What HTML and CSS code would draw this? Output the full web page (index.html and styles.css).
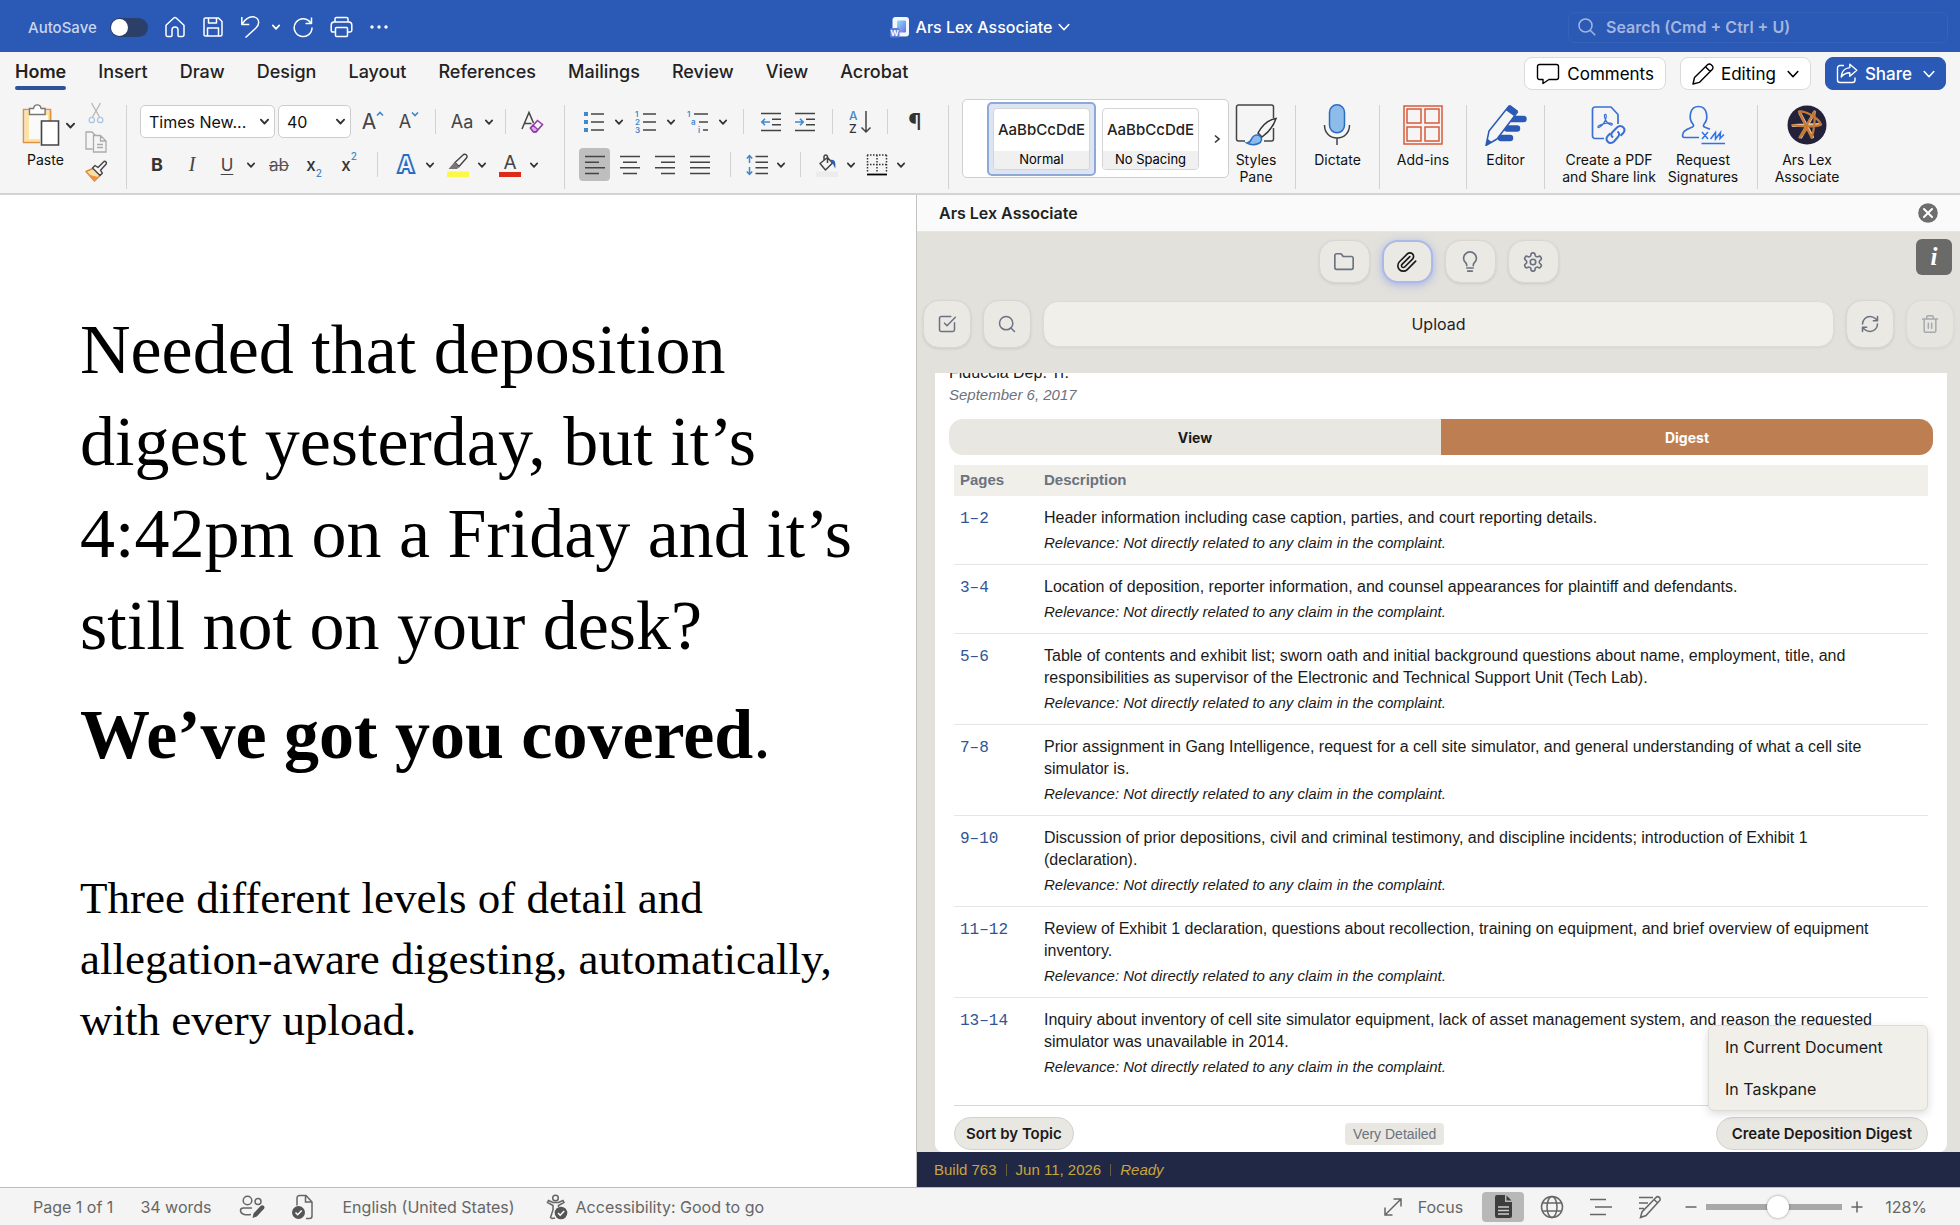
FILE: index.html
```html
<!DOCTYPE html>
<html lang="en">
<head>
<meta charset="utf-8">
<meta name="viewport" content="width=device-width, initial-scale=1">
<title>Ars Lex Associate</title>
<link rel="stylesheet" href="styles.css">
</head>
<body>
<svg class="sprite" aria-hidden="true">
  <symbol id="chev" viewBox="0 0 8 8"><path d="M.8 2.4 4 5.8 7.2 2.4" fill="none" stroke="currentColor" stroke-width="1.7" stroke-linecap="round" stroke-linejoin="round"/></symbol>
  <symbol id="chevthin" viewBox="0 0 12 12"><path d="M1.2 3.5 6 8.7l4.800-5.200" fill="none" stroke="currentColor" stroke-width="1.600" stroke-linecap="round" stroke-linejoin="round"/></symbol>
</svg>

<header class="titlebar">
  <div class="quick">
    <label class="autosave">AutoSave <input type="checkbox" role="switch" class="toggle"></label>
    <button class="qbtn" aria-label="Home"><svg width="22" height="22" viewBox="0 0 22 22"><path d="M2 9.2 9.8 2a1.8 1.8 0 0 1 2.4 0L20 9.2V19a1.4 1.4 0 0 1-1.4 1.4H15a1 1 0 0 1-1-1V14a3 3 0 0 0-6 0v5.4a1 1 0 0 1-1 1H3.4A1.4 1.4 0 0 1 2 19Z"/></svg></button>
    <button class="qbtn" aria-label="Save"><svg width="22" height="22" viewBox="0 0 22 22"><path d="M3.5 2h13L20 5.5V18.500A1.500 1.500 0 0 1 18.500 20h-15A1.500 1.500 0 0 1 2 18.500v-15A1.500 1.500 0 0 1 3.500 2ZM6.500 2v5h8V2M5.500 20v-8h11v8"/></svg></button>
    <button class="qbtn" aria-label="Undo"><svg width="20" height="24" viewBox="0 0 20 24"><path d="M1.8 2v7.500h7.500M2.200 9C5 4.500 8.500 1.800 12.500 1.800c4 0 6.200 2.700 6.200 5.700 0 2.300-1.200 3.900-3 5.700L5.500 22.500"/></svg></button>
    <button class="qbtn qchev" aria-label="Undo options"><svg width="8" height="8"><use href="#chev"/></svg></button>
    <button class="qbtn" aria-label="Redo"><svg width="22" height="22" viewBox="0 0 22 22"><path d="M18.800 7.200A8.900 8.900 0 1 0 20 11.500M19.500 1.500v6h-6"/></svg></button>
    <button class="qbtn" aria-label="Print"><svg width="23" height="22" viewBox="0 0 23 22"><path d="M5 6V3a1.500 1.500 0 0 1 1.500-1.500h10A1.500 1.500 0 0 1 18 3v3M5.500 16H3a1.800 1.800 0 0 1-1.800-1.800V9A3 3 0 0 1 4 6h15a3 3 0 0 1 2.800 3v5.200A1.800 1.800 0 0 1 20 16h-2.500M6.500 11.500h10a1 1 0 0 1 1 1v7a1 1 0 0 1-1 1h-10a1 1 0 0 1-1-1v-7a1 1 0 0 1 1-1Z"/></svg></button>
    <button class="qbtn" aria-label="More"><svg width="20" height="8" viewBox="0 0 20 8"><g fill="currentColor" stroke="none"><circle cx="3" cy="4" r="1.700"/><circle cx="10" cy="4" r="1.700"/><circle cx="17" cy="4" r="1.700"/></g></svg></button>
  </div>
  <button class="doctitle">
    <svg width="20" height="22" viewBox="0 0 20 22"><defs><linearGradient id="wd" x1="0" y1="0" x2="1" y2="1"><stop offset="0" stop-color="#8fe0f2"/><stop offset="1" stop-color="#6a6ee8"/></linearGradient></defs><rect x="2.500" y="1" width="16.500" height="19.500" rx="3" fill="#f4f6fd"/><rect x="7" y="4.500" width="9" height="12" rx="1" fill="url(#wd)"/><rect x="0" y="12" width="9.500" height="9.500" rx="1.500" fill="#5b80d8"/><text x="4.700" y="19.500" font-family="Inter, sans-serif" font-size="8" font-weight="700" fill="#fff" text-anchor="middle">W</text></svg>
    <span>Ars Lex Associate</span>
    <svg width="12" height="12"><use href="#chevthin"/></svg>
  </button>
  <label class="search">
    <svg width="18" height="18" viewBox="0 0 18 18"><circle cx="7.500" cy="7.500" r="6.500"/><path d="m12.200 12.200 5 5"/></svg>
    <input type="search" aria-label="Search" placeholder="Search (Cmd + Ctrl + U)">
  </label>
</header>

<div class="tabbar">
  <nav class="tabs" aria-label="Ribbon tabs">
    <a href="#" class="tab active" aria-current="page">Home</a><a href="#" class="tab">Insert</a><a href="#" class="tab">Draw</a><a href="#" class="tab">Design</a><a href="#" class="tab">Layout</a><a href="#" class="tab">References</a><a href="#" class="tab">Mailings</a><a href="#" class="tab">Review</a><a href="#" class="tab">View</a><a href="#" class="tab">Acrobat</a>
  </nav>
  <div class="tabactions">
    <button class="pill"><svg width="24" height="22" viewBox="0 0 24 22"><path d="M3.500 1.500h17A2 2 0 0 1 22.500 3.500v11a2 2 0 0 1-2 2H13l-6 4v-4H3.500a2 2 0 0 1-2-2v-11a2 2 0 0 1 2-2Z"/></svg>Comments</button>
    <button class="pill"><svg width="22" height="22" viewBox="0 0 22 22"><path d="M1 21 2.500 14.500 15.500 1.800a2.600 2.600 0 0 1 3.700 0l1 1a2.600 2.600 0 0 1 0 3.700L7.300 19.400ZM13.500 3.800l4.700 4.700"/></svg>Editing<svg class="pc" width="12" height="12"><use href="#chevthin"/></svg></button>
    <button class="pill share"><svg width="22" height="21" viewBox="0 0 22 21"><path d="M8 2.500H4A2.500 2.500 0 0 0 1.500 5v12A2.500 2.500 0 0 0 4 19.500h12.500A2.500 2.500 0 0 0 19 17v-2.500M13.800 1.200l7 6-7 6V9.700c-4 0-6.300 1.300-8.600 4.300.3-5 3.300-9 8.600-9.400Z"/></svg>Share<svg class="pc" width="12" height="12"><use href="#chevthin"/></svg></button>
  </div>
</div>

<div class="ribbon" role="toolbar" aria-label="Home">
  <div class="group clipboard">
    <button class="big paste"><span class="bigicon"><svg width="38" height="42" viewBox="0 0 38 42"><path d="M3 7h27v32H3Z" fill="#fbe3a0"/><path d="M7 11h19v24H7Z" fill="#fafafa"/><path d="M1.500 5.500h27v33h-27Z" fill="none" stroke="#e39243" stroke-width="1.600"/><path d="M18 17h20v25H18Z" fill="#f5f5f5"/><path d="M7.500 10.500v-6h4c.4-2.200 1.900-3.600 3.800-3.600s3.400 1.400 3.800 3.600h4v6Z" fill="#fff" stroke="#777" stroke-width="1.400"/><path d="M19.500 17h17v24h-17Z" fill="#fff" stroke="#444" stroke-width="1.600"/></svg><svg class="chev" width="9" height="9"><use href="#chev"/></svg></span><span>Paste</span></button>
    <div class="clipstack">
      <button class="tool" aria-label="Cut"><svg width="22" height="22" viewBox="0 0 22 22" fill="none"><path d="M6.500 1 14.500 15M15.500 1l-8 14" stroke="#b5b5b5" stroke-width="1.300"/><circle cx="6.800" cy="18" r="2.700" stroke="#a9c8e6" stroke-width="1.300"/><circle cx="15.200" cy="18" r="2.700" stroke="#a9c8e6" stroke-width="1.300"/></svg></button>
      <button class="tool" aria-label="Copy"><svg width="22" height="22" viewBox="0 0 22 22" fill="none" stroke="#aaa" stroke-width="1.300"><path d="M7.500 18H1V1h6l3.500 3.500M8.500 4.500h7l5.500 5.500v11H8.500ZM15.500 4.500V10H21M12 13.500h6M12 16.500h6"/></svg></button>
      <button class="tool" aria-label="Format painter"><svg width="22" height="22" viewBox="0 0 22 22" fill="none"><path d="m1 11.500 8-3.500 6.500 7L9.500 21Z" fill="#fbdfa6" stroke="#e08a35" stroke-width="1.400" stroke-linejoin="round"/><path d="M3 14.500 13 17l-4 3.500Z" fill="#e9923f"/><path d="m7.500 8 2.500-2.500 3 2L18.500 2a1.600 1.600 0 0 1 2.500 2.200l-5.500 6 1.800 3-2.300 2.300Z" fill="#f5f5f5" stroke="#444" stroke-width="1.400" stroke-linejoin="round"/></svg></button>
    </div>
  </div>
  <span class="gsep"></span>
  <div class="group fontgroup">
    <div class="row row1">
      <div class="selects">
        <span class="sel selfont"><select aria-label="Font"><option>Times New...</option></select><svg width="9" height="9"><use href="#chev"/></svg></span>
        <span class="sel selsize"><select aria-label="Font size"><option>40</option></select><svg width="9" height="9"><use href="#chev"/></svg></span>
      </div>
      <button class="tool w28 grow" aria-label="Grow font"><span>A</span><svg width="8" height="8" viewBox="0 0 8 8"><path d="M1 5.500 4 2.500l3 3"/></svg></button>
      <button class="tool w28 grow small" aria-label="Shrink font"><span>A</span><svg width="8" height="8" viewBox="0 0 8 8"><path d="m1 2.500 3 3 3-3"/></svg></button>
      <span class="tsep"></span>
      <button class="split case"><span class="w28">Aa</span><svg class="chev" width="8" height="8"><use href="#chev"/></svg></button>
      <span class="tsep"></span>
      <button class="tool w28" aria-label="Clear formatting"><svg width="24" height="24" viewBox="0 0 24 24" fill="none"><path d="M2 19 9 2.500 13.500 13M4.500 13.500h7" stroke="#444" stroke-width="1.500"/><path d="m10.500 18 7-7.500 5 4-6.500 7.500h-2.500Z" fill="#f5f5f5" stroke="#9339a8" stroke-width="1.600"/><path d="m10.500 18 2.500-2.800 4.800 4.300-1.900 2.300h-2.500Z" fill="#d9b3e0" stroke="#9339a8" stroke-width="1.400"/></svg></button>
    </div>
    <div class="row row2">
      <button class="tool w22 tb">B</button>
      <button class="tool w22 ti">I</button>
      <button class="split"><span class="w22 tu">U</span><svg class="chev" width="8" height="8"><use href="#chev"/></svg></button>
      <button class="tool w22 ts">ab</button>
      <button class="tool w22 tx">x<sub>2</sub></button>
      <button class="tool w22 tx">x<sup>2</sup></button>
      <span class="tsep"></span>
      <button class="split"><span class="w22 fx">A</span><svg class="chev" width="8" height="8"><use href="#chev"/></svg></button>
      <button class="split" aria-label="Highlight"><svg width="22" height="24" viewBox="0 0 22 24"><path d="M0 18.500h22v5.500H0Z" fill="#fdf748"/><path d="M8 9.500 16 2a2.300 2.300 0 0 1 3.500 3l-7.500 8.500Z" fill="#f5f5f5" stroke="#444" stroke-width="1.400"/><path d="m7.500 9 5 5-2.500 2H1.500Z" fill="#777"/></svg><svg class="chev" width="8" height="8"><use href="#chev"/></svg></button>
      <button class="split"><span class="w22 fc">A</span><svg class="chev" width="8" height="8"><use href="#chev"/></svg></button>
    </div>
  </div>
  <span class="gsep"></span>
  <div class="group paragroup">
    <div class="row row1">
      <button class="split" aria-label="Bullets"><svg width="22" height="22" viewBox="0 0 22 22"><path d="M8 3h13M8 11h13M8 19h13" stroke="#444" stroke-width="1.600"/><path d="M1 1h4v4H1ZM1 9h4v4H1ZM1 17h4v4H1Z" fill="#3f88cc"/></svg><svg class="chev" width="8" height="8"><use href="#chev"/></svg></button>
      <button class="split" aria-label="Numbering"><svg width="22" height="24" viewBox="0 0 22 24"><path d="M8 4h13M8 12h13M8 20h13" stroke="#444" stroke-width="1.600"/><g font-family="Inter, sans-serif" font-weight="600" font-size="8" fill="#3f88cc"><text x="0" y="7">1</text><text x="0" y="15">2</text><text x="0" y="23">3</text></g></svg><svg class="chev" width="8" height="8"><use href="#chev"/></svg></button>
      <button class="split" aria-label="Multilevel list"><svg width="22" height="24" viewBox="0 0 22 24"><path d="M7 4h14M12 12h9M16 20h5" stroke="#444" stroke-width="1.600"/><g font-family="Inter, sans-serif" font-weight="600" font-size="8" fill="#3f88cc"><text x="0" y="7">1</text><text x="4" y="15">a</text><text x="11" y="23">i</text></g></svg><svg class="chev" width="8" height="8"><use href="#chev"/></svg></button>
      <span class="tsep"></span>
      <button class="tool w22" aria-label="Decrease indent"><svg width="22" height="22" viewBox="0 0 22 22" fill="none"><path d="M1 2.500h20M12 8.200h9M12 13.800h9M1 19.500h20" stroke="#444" stroke-width="1.500"/><path d="M10 11H2M5 7.800 1.800 11 5 14.200" stroke="#3f88cc" stroke-width="1.600"/></svg></button>
      <button class="tool w22" aria-label="Increase indent"><svg width="22" height="22" viewBox="0 0 22 22" fill="none"><path d="M1 2.500h20M12 8.200h9M12 13.800h9M1 19.500h20" stroke="#444" stroke-width="1.500"/><path d="M1 11h8M6 7.800 9.200 11 6 14.200" stroke="#3f88cc" stroke-width="1.600"/></svg></button>
      <span class="tsep"></span>
      <button class="tool w22" aria-label="Sort"><svg width="24" height="28" viewBox="0 0 24 28"><g font-family="Inter, sans-serif" font-weight="500" font-size="12"><text x="1" y="12" fill="#3f88cc">A</text><text x="1" y="25" fill="#333">Z</text></g><path d="M18 3v21M13.500 19.500 18 24l4.500-4.500" fill="none" stroke="#444" stroke-width="1.500"/></svg></button>
      <span class="tsep"></span>
      <button class="tool w22 pilcrow" aria-label="Show marks">¶</button>
    </div>
    <div class="row row2">
      <div class="aligns">
        <button class="align on" aria-label="Align left"><svg width="22" height="22" viewBox="0 0 22 22"><path d="M1 2.500h20M1 8.200h14M1 13.800h20M1 19.500h14"/></svg></button>
        <button class="align" aria-label="Align centre"><svg width="22" height="22" viewBox="0 0 22 22"><path d="M1 2.500h20M4 8.200h14M1 13.800h20M4 19.500h14"/></svg></button>
        <button class="align" aria-label="Align right"><svg width="22" height="22" viewBox="0 0 22 22"><path d="M1 2.500h20M7 8.200h14M1 13.800h20M7 19.500h14"/></svg></button>
        <button class="align" aria-label="Justify"><svg width="22" height="22" viewBox="0 0 22 22"><path d="M1 2.500h20M1 8.200h20M1 13.800h20M1 19.500h20"/></svg></button>
      </div>
      <span class="tsep"></span>
      <button class="split" aria-label="Line spacing"><svg width="22" height="22" viewBox="0 0 22 22" fill="none"><path d="M9.500 2.500H22M9.500 8.200H22M9.500 13.800H22M9.500 19.500H22" stroke="#444" stroke-width="1.500"/><path d="M3.500 2v7M.8 4.500l2.700-3 2.700 3M3.500 13v7M.8 17.500l2.700 3 2.700-3" stroke="#3f88cc" stroke-width="1.500"/></svg><svg class="chev" width="8" height="8"><use href="#chev"/></svg></button>
      <span class="tsep"></span>
      <button class="split" aria-label="Shading"><svg width="22" height="24" viewBox="0 0 22 24"><path d="M0 18.500h22v5.500H0Z" fill="#ececec"/><path d="M4 10.500 11.500 4.500l5 5.500-7 7ZM11.500 10V3.500a1.800 1.800 0 0 0-3.500 0V7" fill="none" stroke="#444" stroke-width="1.500" stroke-linejoin="round"/><path d="M14.500 7c4-1 5.500 1.500 4.800 8.500-1.300-2-2-4.500-2.800-5.500Z" fill="#2c62b5"/></svg><svg class="chev" width="8" height="8"><use href="#chev"/></svg></button>
      <button class="split" aria-label="Borders"><svg width="22" height="22" viewBox="0 0 22 22" fill="none" stroke="#333" stroke-width="1.500"><path d="M1 1h20M1.500 1v18M20.500 1v18M11 1v18M1 10.500h20" stroke-dasharray="1.500 1.500"/><path d="M1 20.500h20" stroke="#000" stroke-width="1.800"/></svg><svg class="chev" width="8" height="8"><use href="#chev"/></svg></button>
    </div>
  </div>
  <span class="gsep"></span>
  <div class="group stylegroup">
    <div class="gallery">
      <button class="style on"><span class="sbox"><span class="sample">AaBbCcDdE</span><span class="sname">Normal</span></span></button>
      <button class="style"><span class="sbox"><span class="sample">AaBbCcDdE</span><span class="sname">No Spacing</span></span></button>
      <button class="more" aria-label="More styles"><svg width="8" height="10" viewBox="0 0 8 10"><path d="m2 1.500 4 3.500-4 3.500" fill="none" stroke="#333" stroke-width="1.600"/></svg></button>
    </div>
    <button class="big wpane"><span class="bigicon"><svg width="42" height="42" viewBox="0 0 42 42" fill="none"><path d="M10 37H3.500A2 2 0 0 1 1.500 35V3a2 2 0 0 1 2-2h33A2 2 0 0 1 38.500 3v11M38.500 24v11a2 2 0 0 1-2 2H29" stroke="#444" stroke-width="1.500"/><path d="M23 29C28 20 34 15.500 41 14.500 39 21 34.500 27.500 27 33Z" fill="#f5f5f5" stroke="#333" stroke-width="1.500"/><path d="M12 39c3 0 3.500-2 5-5 1.500-3 5-4 8-2 2.500 2.500 1.800 6-1.500 7.500-3.500 1.500-8 1.500-11.500-.5Z" fill="#8dbbea" stroke="#2c6cc0" stroke-width="1.500"/></svg></span><span>Styles<br>Pane</span></button>
  </div>
  <span class="gsep"></span>
  <div class="group gdict"><button class="big"><span class="bigicon"><svg width="28" height="42" viewBox="0 0 28 42" fill="none"><rect x="6.500" y="0.800" width="15" height="28" rx="7.500" fill="#8dbbea" stroke="#2c6cc0" stroke-width="1.500"/><path d="M1.500 21c0 8 5.500 13 12.500 13s12.500-5 12.500-13M14 34v7" stroke="#444" stroke-width="1.500"/></svg></span><span>Dictate</span></button></div>
  <span class="gsep"></span>
  <div class="group gadd"><button class="big"><span class="bigicon"><svg width="40" height="40" viewBox="0 0 40 40" fill="none" stroke="#d9593a" stroke-width="1.500"><path d="M1 1h38v38H1ZM4 4h14v14H4ZM22 4h14v14H22ZM4 22h14v14H4ZM22 22h14v14H22Z"/></svg></span><span>Add-ins</span></button></div>
  <span class="gsep"></span>
  <div class="group gedit"><button class="big"><span class="bigicon"><svg width="42" height="42" viewBox="0 0 42 42"><g stroke="#2b59b6" stroke-width="6.500" stroke-linecap="round"><path d="M26 15h12.500M22 24.500h10M16 34h9"/></g><path d="M1 41.500 4 27 24 2l8.500 6L12 35Z" fill="#f5f5f5" stroke="#2b59b6" stroke-width="1.500" stroke-linejoin="round"/><path d="M20.500 6 25 .8 33 6.800 29 12ZM1 41.500 2.300 34.500 6.500 38Z" fill="#2b59b6"/></svg></span><span>Editor</span></button></div>
  <span class="gsep"></span>
  <div class="group gadobe">
    <button class="big wpdf"><span class="bigicon"><svg width="36" height="40" viewBox="0 0 36 40" fill="none" stroke="#3a6fd8" stroke-width="1.700" stroke-linejoin="round"><path d="M13 33.500H4A2.500 2.500 0 0 1 1.500 31V4.500A2.500 2.500 0 0 1 4 2h16l7 7.500V19"/><path d="M13.500 10c1-1.800 2.500-.2 1.500 3-1 4-3.500 7.500-7 9.500-1.500.5-1.500-1 0-2 4-2 8.500-3.200 12.500-2.200 1.800.8.500 2.500-1.200 1.500-3.500-1.800-6.800-6.800-5.800-9.800Z" stroke-width="1.200"/><g stroke-width="2"><path d="M22 32.500c-2.500-2-2-4 0-6l4-4c2-2 4.500-2 6.200-.2 1.800 1.800 1.600 4-.2 6l-2.500 2.500"/><path d="M26.500 26.500c2.500 2 2 4 0 6l-3.500 4c-2 2-4.500 2-6.200.2-1.800-1.800-1.600-4 .2-6l2.500-2.500"/></g></svg></span><span>Create a PDF<br>and Share link</span></button>
    <button class="big wreq"><span class="bigicon"><svg width="44" height="40" viewBox="0 0 44 40" fill="none" stroke="#3a6fd8" stroke-width="1.700"><path d="M18 32.500H3.500c-2 0-2.300-1.500-1.500-4 1-3.500 5-4.500 9-6.200 2-.8 2-2 .5-3.800C7.500 13.500 8.500 1.500 17.500 1.500s10 12 6 17c-1.500 2-1.500 3 .5 3.800l5 2"/><path d="m21 27 6 7M27 27l-6 7M29.500 34l5-6.500V34l5-6.500-.5 6 4-4M20.500 38.500H44" stroke="#2b74ea" stroke-width="1.500"/></svg></span><span>Request<br>Signatures</span></button>
  </div>
  <span class="gsep"></span>
  <div class="group gars"><button class="big"><span class="bigicon"><svg width="40" height="40" viewBox="0 0 40 40" fill="none"><circle cx="20" cy="20" r="19.500" fill="#24223a"/><g stroke-linecap="round" stroke-linejoin="round"><path d="M13 8.500 25.500 32M27.500 7 14 32M6 20.500l27-1" stroke="#e0c3a6" stroke-width="3"/><path d="M12 6.500C17 5.500 31 12 34 19.500 30 22 14 22 5.500 20M12 6.500 24.500 32.500C27 26 28 15 27.500 6.500L12.500 32.500c3.500-2 7-8 8-12" stroke="#c47a34" stroke-width="2.200"/></g></svg></span><span>Ars Lex<br>Associate</span></button></div>
</div>

<main class="workspace">
  <article class="document">
    <p class="lead">Needed that deposition digest yesterday, but it’s 4:42pm on a Friday and it’s still not on your desk?</p>
    <p class="lead"><strong>We’ve got you covered</strong>.</p>
    <p class="body">Three different levels of detail and allegation-aware digesting, automatically, with every upload.</p>
  </article>

  <aside class="pane">
    <div class="panehead"><h2>Ars Lex Associate</h2><button class="close" aria-label="Close"><svg width="20" height="20" viewBox="0 0 20 20"><circle cx="10" cy="10" r="9.800" fill="#6e6e6e"/><path d="m6 6 8 8M14 6l-8 8" stroke="#fff" stroke-width="2" stroke-linecap="round"/></svg></button></div>
    <div class="nav">
      <button class="ibtn" aria-label="Folders"><svg width="22" height="22" viewBox="0 0 24 24"><path d="M4 20h16a2 2 0 0 0 2-2V8a2 2 0 0 0-2-2h-7.900a2 2 0 0 1-1.690-.9L9.600 3.900A2 2 0 0 0 7.930 3H4a2 2 0 0 0-2 2v13a2 2 0 0 0 2 2Z"/></svg></button>
      <button class="ibtn on" aria-label="Attachments"><svg width="22" height="22" viewBox="0 0 24 24"><path d="m21.440 11.050-9.190 9.190a6 6 0 0 1-8.490-8.490l8.570-8.570A4 4 0 1 1 18 8.840l-8.590 8.570a2 2 0 0 1-2.830-2.830l8.490-8.480"/></svg></button>
      <button class="ibtn" aria-label="Ideas"><svg width="22" height="22" viewBox="0 0 24 24"><path d="M8.500 16c0-1.500-.5-2.500-1.500-3.500C5.600 11.200 5 9.700 5 8a7 7 0 0 1 14 0c0 1.700-.6 3.200-2 4.500-1 1-1.500 2-1.500 3.500M8.500 18.500h7M9.500 22h5"/></svg></button>
      <button class="ibtn" aria-label="Settings"><svg width="22" height="22" viewBox="0 0 24 24"><path d="M12.220 2h-.44a2 2 0 0 0-2 2v.18a2 2 0 0 1-1 1.730l-.43.25a2 2 0 0 1-2 0l-.15-.08a2 2 0 0 0-2.730.73l-.22.38a2 2 0 0 0 .73 2.730l.15.1a2 2 0 0 1 1 1.720v.51a2 2 0 0 1-1 1.740l-.15.09a2 2 0 0 0-.73 2.730l.22.38a2 2 0 0 0 2.730.73l.15-.08a2 2 0 0 1 2 0l.43.25a2 2 0 0 1 1 1.730V20a2 2 0 0 0 2 2h.44a2 2 0 0 0 2-2v-.18a2 2 0 0 1 1-1.730l.43-.25a2 2 0 0 1 2 0l.15.08a2 2 0 0 0 2.730-.73l.22-.39a2 2 0 0 0-.73-2.730l-.15-.08a2 2 0 0 1-1-1.740v-.5a2 2 0 0 1 1-1.740l.15-.09a2 2 0 0 0 .73-2.730l-.22-.38a2 2 0 0 0-2.730-.73l-.15.08a2 2 0 0 1-2 0l-.43-.25a2 2 0 0 1-1-1.730V4a2 2 0 0 0-2-2z"/><circle cx="12" cy="12" r="3"/></svg></button>
      <button class="info" aria-label="Information">i</button>
    </div>
    <div class="actions">
      <button class="ibtn sq" aria-label="Select"><svg width="20" height="20" viewBox="0 0 24 24"><path d="M21 10.500V19a2 2 0 0 1-2 2H5a2 2 0 0 1-2-2V5a2 2 0 0 1 2-2h11.500M9 11l3 3L22 4"/></svg></button>
      <button class="ibtn sq" aria-label="Find"><svg width="20" height="20" viewBox="0 0 24 24"><circle cx="11" cy="11" r="8"/><path d="m21 21-4.300-4.300"/></svg></button>
      <button class="upload">Upload</button>
      <button class="ibtn sq" aria-label="Refresh"><svg width="20" height="20" viewBox="0 0 24 24"><path d="M3 12a9 9 0 0 1 9-9 9.750 9.750 0 0 1 6.740 2.740L21 8M21 3v5h-5M21 12a9 9 0 0 1-9 9 9.750 9.750 0 0 1-6.740-2.740L3 16M8 16H3v5"/></svg></button>
      <button class="ibtn sq" aria-label="Delete" disabled><svg width="20" height="20" viewBox="0 0 24 24"><path d="M3 6h18M19 6v14a2 2 0 0 1-2 2H7a2 2 0 0 1-2-2V6M8 6V4a2 2 0 0 1 2-2h4a2 2 0 0 1 2 2v2M10 11v6M14 11v6"/></svg></button>
    </div>
    <div class="scroller">
      <section class="card">
        <div class="depname">Fiduccia Dep. Tr.</div>
        <div class="depdate">September 6, 2017</div>
        <div class="switch"><button>View</button><button class="on">Digest</button></div>
        <table class="digest">
          <thead><tr><th class="pages">Pages</th><th>Description</th></tr></thead>
          <tbody>
            <tr><td><a href="#">1–2</a></td><td><p>Header information including case caption, parties, and court reporting details.</p><p class="rel">Relevance: Not directly related to any claim in the complaint.</p></td></tr>
            <tr><td><a href="#">3–4</a></td><td><p>Location of deposition, reporter information, and counsel appearances for plaintiff and defendants.</p><p class="rel">Relevance: Not directly related to any claim in the complaint.</p></td></tr>
            <tr><td><a href="#">5–6</a></td><td><p>Table of contents and exhibit list; sworn oath and initial background questions about name, employment, title, and responsibilities as supervisor of the Electronic and Technical Support Unit (Tech Lab).</p><p class="rel">Relevance: Not directly related to any claim in the complaint.</p></td></tr>
            <tr><td><a href="#">7–8</a></td><td><p>Prior assignment in Gang Intelligence, request for a cell site simulator, and general understanding of what a cell site simulator is.</p><p class="rel">Relevance: Not directly related to any claim in the complaint.</p></td></tr>
            <tr><td><a href="#">9–10</a></td><td><p>Discussion of prior depositions, civil and criminal testimony, and discipline incidents; introduction of Exhibit 1 (declaration).</p><p class="rel">Relevance: Not directly related to any claim in the complaint.</p></td></tr>
            <tr><td><a href="#">11–12</a></td><td><p>Review of Exhibit 1 declaration, questions about recollection, training on equipment, and brief overview of equipment inventory.</p><p class="rel">Relevance: Not directly related to any claim in the complaint.</p></td></tr>
            <tr><td><a href="#">13–14</a></td><td><p>Inquiry about inventory of cell site simulator equipment, lack of asset management system, and reason the requested simulator was unavailable in 2014.</p><p class="rel">Relevance: Not directly related to any claim in the complaint.</p></td></tr>
          </tbody>
        </table>
        <div class="cardfoot">
          <button class="round">Sort by Topic</button>
          <span class="badge">Very Detailed</span>
          <div class="createwrap">
            <button class="round create" aria-haspopup="menu" aria-expanded="true">Create Deposition Digest</button>
            <div class="menu" role="menu"><button role="menuitem">In Current Document</button><button role="menuitem">In Taskpane</button></div>
          </div>
        </div>
      </section>
    </div>
    <div class="build"><span>Build 763</span><i class="bar"></i><span>Jun 11, 2026</span><i class="bar"></i><em>Ready</em></div>
  </aside>
</main>

<footer class="status">
  <button class="st">Page 1 of 1</button>
  <button class="st">34 words</button>
  <button class="st" aria-label="Co-authors"><svg width="26" height="26" viewBox="0 0 26 26"><circle cx="8.500" cy="6.500" r="4.300"/><circle cx="19" cy="7.500" r="3"/><path d="M12 20.500C6 21.500 1.500 20 1.500 16.500 1.500 14.500 3 14 4.500 14H13"/><path d="m13.500 24 1-4.500 7-7.500a2.200 2.200 0 0 1 3.300 3l-7 7.500Z" fill="#555" stroke="none"/></svg></button>
  <button class="st" aria-label="Proofing"><svg width="22" height="26" viewBox="0 0 22 26"><path d="M5 11.500V4a2.500 2.500 0 0 1 2.500-2.500H14L20 8v14a2.500 2.500 0 0 1-2.500 2.500H14M13.500 1.500V8H20"/><circle cx="6.500" cy="18.500" r="6.500" fill="#555" stroke="none"/><path d="m3.500 18.500 2.200 2.200 4-4.200" stroke="#fff"/></svg></button>
  <button class="st lang">English (United States)</button>
  <button class="st acc"><svg width="22" height="26" viewBox="0 0 22 26"><circle cx="9.500" cy="4" r="2.800"/><path d="M9 24 6 24.500 4.500 23.500 7 16V11.500L1.500 8.500 2.500 6.500 7 8.500h5.500L17 6.500 18 8.500 12.500 11.500V13"/><circle cx="15" cy="19" r="6.300" fill="#555" stroke="none"/><path d="m12 19 2.200 2.200 4-4.200" stroke="#fff"/></svg>Accessibility: Good to go</button>
  <div class="right">
    <button class="st focus"><svg width="18" height="18" viewBox="0 0 18 18"><path d="M1 17 17 1M9.500 1H17v7.500M8.500 17H1V9.500"/></svg>Focus</button>
    <div class="views">
      <button class="view on" aria-label="Print layout"><svg width="17" height="23" viewBox="0 0 17 23"><path d="M2 0h8v7h7v14a2 2 0 0 1-2 2H2a2 2 0 0 1-2-2V2A2 2 0 0 1 2 0Z" fill="#3d3d3d" stroke="none"/><path d="M11.500.5 16.500 5.500h-5Z" fill="#3d3d3d" stroke="none"/><path d="M3 12h11M3 15.500h11M3 19h11" stroke="#ccc"/></svg></button>
      <button class="view" aria-label="Web layout"><svg width="24" height="24" viewBox="0 0 24 24"><circle cx="12" cy="12" r="10.500"/><ellipse cx="12" cy="12" rx="5" ry="10.500"/><path d="M2.500 8h19M2.500 16h19"/></svg></button>
      <button class="view" aria-label="Outline"><svg width="24" height="18" viewBox="0 0 24 18"><path d="M1 1.500h16M6 9h17M1 16.500h16"/></svg></button>
      <button class="view" aria-label="Draft"><svg width="24" height="24" viewBox="0 0 24 24"><path d="M1 2.500h14M1 8h9M1 13.500h5M2.500 22.500 4 17 18 2.500a2.300 2.300 0 0 1 3.500 3.300L8 20.500ZM16 4.500l3.500 3.300"/></svg></button>
    </div>
    <div class="zoom">
      <button class="zb" aria-label="Zoom out"><svg width="12" height="12" viewBox="0 0 12 12"><path d="M.5 6h11"/></svg></button>
      <input type="range" aria-label="Zoom" min="0" max="100" value="53">
      <button class="zb" aria-label="Zoom in"><svg width="12" height="12" viewBox="0 0 12 12"><path d="M.5 6h11M6 .5v11"/></svg></button>
    </div>
    <button class="st">128%</button>
  </div>
</footer>
</body>
</html>
```
FILE: styles.css
```css
* { box-sizing: border-box; }
html, body { height: 100%; margin: 0; }
body {
  display: flex;
  flex-direction: column;
  overflow: hidden;
  background: #f5f5f5;
  color: #222;
  font-family: Inter, "Liberation Sans", sans-serif;
  font-size: 16px;
}
button {
  margin: 0;
  padding: 0;
  border: 0;
  background: none;
  color: inherit;
  font: inherit;
}
svg { display: block; flex: none; }
p { margin: 0; }
.sprite { position: absolute; width: 0; height: 0; }

/* Title bar */
.titlebar {
  display: grid;
  grid-template-columns: 1fr auto 1fr;
  align-items: center;
  height: 52px;
  flex: none;
  padding: 2px 12px 0;
  background: #2b59b6;
  color: #fff;
}
.quick { display: flex; align-items: center; gap: 16px; padding-left: 16px; }
.autosave {
  display: flex;
  align-items: center;
  gap: 13px;
  color: #c9d5ee;
  font-size: 15px;
  font-weight: 500;
}
.toggle {
  appearance: none;
  display: flex;
  width: 38px;
  height: 19px;
  margin: 0;
  border-radius: 10px;
  background: #2b3f68;
}
.toggle::before {
  content: "";
  width: 17px;
  height: 17px;
  margin: 1px;
  border-radius: 50%;
  background: #fff;
}
.qbtn svg { fill: none; stroke: currentColor; stroke-width: 1.5; stroke-linejoin: round; }
.qchev { margin: 0 -4px; }
.doctitle { display: flex; align-items: center; gap: 6px; font-weight: 500; }
.search {
  justify-self: end;
  display: flex;
  align-items: center;
  gap: 10px;
  width: 380px;
  height: 31px;
  padding: 0 9px;
  border: 1px solid #3762ba;
  border-radius: 7px;
}
.search svg { fill: none; stroke: #a3b6de; stroke-width: 1.5; }
.search input {
  flex: 1;
  min-width: 0;
  padding: 0;
  border: 0;
  outline: 0;
  background: none;
  color: #fff;
  font: 600 16px Inter, sans-serif;
}
.search input::placeholder { color: #a3b6de; opacity: 1; }

/* Tab bar */
.tabbar {
  display: flex;
  justify-content: space-between;
  flex: none;
  height: 44px;
  padding: 0 14px 0 15px;
}
.tabs { display: flex; gap: 32px; padding-top: 8px; }
.tab {
  color: #222;
  font-size: 18px;
  font-weight: 500;
  line-height: 24px;
  text-decoration: none;
}
.tab.active { font-weight: 600; }
.tab.active::after {
  content: "";
  display: block;
  height: 4px;
  margin-top: 2px;
  border-radius: 2px;
  background: #30519b;
}
.tabactions { display: flex; gap: 14px; padding-top: 5px; }
.pill {
  display: flex;
  align-items: center;
  justify-content: center;
  gap: 7px;
  height: 33px;
  padding: 0 11px;
  border: 1px solid #dadada;
  border-radius: 8px;
  background: #fff;
  color: #000;
  font-size: 17px;
}
.pill svg { fill: none; stroke: currentColor; stroke-width: 1.4; stroke-linejoin: round; }
.pill .pc { margin-left: 4px; }
.share { padding: 0 10px; border-color: #2b59b6; background: #2b59b6; color: #fff; font-weight: 500; }

/* Ribbon */
.ribbon {
  display: flex;
  flex: none;
  padding: 3px 0 4px;
  border-bottom: 2px solid #d3d3d3;
}
.group { flex: none; padding-top: 6px; }
.gsep { flex: none; width: 1px; height: 84px; margin-top: 6px; background: #d2d2d2; }
.big {
  display: flex;
  flex-direction: column;
  align-items: center;
  gap: 6px;
  color: #111;
  font-size: 14px;
  line-height: 17px;
  text-align: center;
  white-space: nowrap;
}
.bigicon { display: flex; align-items: center; justify-content: center; gap: 6px; height: 40px; }
.chev { color: #333; }
.clipboard { display: flex; gap: 10px; width: 126px; padding-left: 22px; }
.paste { align-items: flex-start; }
.paste > span:last-child { padding-left: 5px; }
.clipstack { display: flex; flex-direction: column; gap: 7px; margin-top: -3px; }
.tool { display: flex; align-items: center; justify-content: center; height: 33px; }
.clipstack .tool { height: 22px; }
.split { display: flex; align-items: center; gap: 9px; height: 33px; color: #333; }
.w22 { display: block; width: 22px; text-align: center; }
.w28 { display: block; width: 28px; text-align: center; }
.tool.w22, .tool.w28 { display: flex; }
.row { display: flex; align-items: center; height: 33px; }
.row + .row { margin-top: 10px; }
.tsep { width: 1px; height: 25px; margin: 0 4px; background: #d2d2d2; }

.fontgroup { width: 437px; padding-left: 13px; }
.fontgroup .row1 { gap: 8px; }
.fontgroup .row2 { gap: 13px; padding-left: 6px; }
.selects { display: flex; gap: 3px; }
.sel { display: grid; align-items: center; }
.sel > * { grid-area: 1 / 1; }
.sel svg { justify-self: end; margin-right: 6px; color: #333; pointer-events: none; }
.sel select {
  appearance: none;
  width: 100%;
  height: 33px;
  padding: 0 8px;
  border: 1px solid #cdcdcd;
  border-radius: 5px;
  background: #fff;
  color: #111;
  font: 16px Inter, sans-serif;
}
.selfont { width: 135px; }
.selsize { width: 73px; }
.grow { color: #444; font-size: 21px; line-height: 24px; }
.grow svg { align-self: flex-start; margin-top: 5px; fill: none; stroke: #3f88cc; stroke-width: 1.7; }
.grow.small { font-size: 18px; }
.case { color: #444; font-size: 18px; }
.tb { color: #333; font-size: 18px; font-weight: 700; }
.ti { color: #444; font-family: "Liberation Serif", serif; font-size: 20px; font-style: italic; }
.tu { color: #444; font-size: 17px; text-decoration: underline; text-underline-offset: 3px; }
.ts { color: #555; font-size: 17px; text-decoration: line-through; }
.tx { color: #333; font-size: 17px; font-weight: 500; }
.tx sub, .tx sup { color: #3f88cc; font-size: 10px; line-height: 10px; }
.tx sub { align-self: flex-end; margin-bottom: 3px; }
.tx sup { align-self: flex-start; margin-top: 3px; }
.fx {
  color: #f2f7fd;
  font-size: 21px;
  font-weight: 500;
  line-height: 24px;
  -webkit-text-stroke: 4px #2c6cc0;
  paint-order: stroke fill;
}
.fc { height: 24px; border-bottom: 5px solid #dd2a1b; color: #444; font-size: 19px; line-height: 19px; }

.paragroup { width: 383px; padding-left: 14px; }
.paragroup .row1 { gap: 12px; padding-left: 4px; }
.paragroup .row1 .split { gap: 10px; }
.paragroup .row2 { gap: 11px; }
.pilcrow { color: #333; font-size: 23px; }
.aligns { display: flex; gap: 4px; }
.align { display: grid; place-items: center; width: 31px; height: 33px; border-radius: 4px; }
.align.on { background: #bebebe; }
.align svg { fill: none; stroke: #444; stroke-width: 1.5; }

.stylegroup { display: flex; width: 346px; padding: 0 0 0 13px; }
.gallery {
  display: flex;
  align-items: center;
  width: 267px;
  height: 79px;
  padding-left: 24px;
  border: 1px solid #cfcfcf;
  border-radius: 5px;
  background: #fff;
}
.style { width: 109px; height: 74px; padding: 5px; border: 1px solid transparent; border-radius: 5px; }
.style.on { border: 2px solid #8ea9d8; padding: 4px; background: #dde5f3; }
.sbox {
  display: flex;
  flex-direction: column;
  height: 100%;
  overflow: hidden;
  border: 1px solid #d5d5d5;
  border-radius: 4px;
  background: #fff;
}
.sample { flex: 1; font-size: 15px; font-weight: 500; line-height: 42px; }
.sname { height: 20px; background: #f0f0f0; color: #000; font-size: 13px; line-height: 16px; }
.more { flex: 1; display: grid; place-items: center; height: 100%; }
.stylegroup .big { padding-top: 6px; }
.wpane { width: 54px; }
.gdict, .gadd, .gedit, .gars { display: flex; justify-content: center; align-items: flex-start; }
.gdict { width: 83px; }
.gadd { width: 86px; }
.gedit { width: 77px; }
.gadobe { display: flex; align-items: flex-start; width: 212px; padding-left: 12px; }
.wpdf { width: 104px; }
.wreq { width: 84px; }
.gars { width: 98px; }

/* Work area */
.workspace {
  flex: 1;
  min-height: 0;
  display: grid;
  grid-template-columns: minmax(0, 916fr) minmax(0, 1044fr);
  background: #fff;
}
.document {
  overflow: hidden;
  padding: 109px 56px 0 80px;
  color: #000;
  font-family: "Liberation Serif", serif;
}
.lead { font-size: 70px; line-height: 92px; }
.lead + .lead { margin-top: 17px; }
.body { margin-top: 87px; font-size: 45px; line-height: 61px; }

.pane {
  display: flex;
  flex-direction: column;
  min-width: 0;
  min-height: 0;
  border-left: 1px solid #c2c2be;
  background: #e2e1dc;
}
.panehead {
  display: flex;
  align-items: center;
  justify-content: space-between;
  flex: none;
  height: 37px;
  padding: 0 22px;
  border-bottom: 1px solid #e6e6e3;
  background: #fafafa;
}
.panehead h2 { margin: 0; color: #222; font-size: 16px; font-weight: 600; }
.nav {
  display: flex;
  justify-content: center;
  gap: 12px;
  flex: none;
  position: relative;
  padding-top: 8px;
}
.ibtn {
  display: grid;
  place-items: center;
  width: 51px;
  height: 43px;
  border: 1px solid #d8d7d2;
  border-radius: 16px;
  background: #eae9e4;
  color: #6b7280;
  box-shadow: 0 1px 3px rgba(0, 0, 0, .1);
}
.ibtn svg { fill: none; stroke: currentColor; stroke-width: 1.8; stroke-linecap: round; stroke-linejoin: round; }
.ibtn.on { border: 2px solid #abb9ea; color: #1a1a1a; box-shadow: 0 2px 8px rgba(110, 135, 230, .5); }
.sq { flex: none; width: 48px; height: 48px; }
.ibtn:disabled { opacity: .5; }
.info {
  position: absolute;
  top: 7px;
  right: 8px;
  width: 36px;
  height: 36px;
  border-radius: 6px;
  background: #6a6a68;
  color: #fff;
  font: italic 700 25px "Liberation Serif", serif;
}
.actions { display: flex; align-items: center; gap: 12px; flex: none; padding: 17px 6px 25px; }
.upload {
  flex: 1;
  height: 46px;
  border: 1px solid #dcdbd6;
  border-radius: 15px;
  background: #f0efea;
  color: #1f1f1f;
  box-shadow: 0 1px 3px rgba(0, 0, 0, .06);
  font-size: 16px;
}
.scroller {
  flex: 1;
  min-height: 0;
  overflow: hidden;
  padding: 0 13px 0 18px;
}
.card {
  margin-top: -11px;
  padding: 0 14px 2px;
  border-radius: 8px;
  background: #fff;
  font-family: "Liberation Sans", Arial, sans-serif;
}
.depname { color: #1a1a1a; font-size: 16px; line-height: 22px; }
.depdate { color: #6b7280; font-size: 15px; font-style: italic; line-height: 22px; }
.switch {
  display: grid;
  grid-template-columns: 1fr 1fr;
  height: 36px;
  margin: 13px 0 10px;
  overflow: hidden;
  border-radius: 14px;
  background: #e8e7e2;
}
.switch button { color: #1a1a1a; font: 700 14px Inter, sans-serif; }
.switch .on { background: #bd7f52; color: #fff; }
.digest { width: calc(100% - 10px); margin: 0 5px; border-collapse: collapse; color: #1a1a1a; font-size: 16px; }
.digest th {
  height: 31px;
  padding: 0 6px 2px;
  background: #f0efea;
  color: #6b7280;
  font-size: 15px;
  font-weight: 700;
  text-align: left;
  line-height: 22px;
}
.digest .pages { width: 84px; }
.digest td { padding: 11px 24px 11px 6px; vertical-align: top; line-height: 22px; }
.digest td:first-child { padding-right: 0; }
.digest tbody tr { border-bottom: 1px solid #e6e6e6; }
.digest tbody tr:last-child { border-bottom: 0; }
.digest a { color: #2f5596; font-family: "Liberation Mono", monospace; text-decoration: none; }
.rel { margin-top: 3px; font-size: 15px; font-style: italic; line-height: 21px; }
.cardfoot {
  display: flex;
  align-items: center;
  justify-content: space-between;
  margin: 17px 5px 0;
  padding-top: 11px;
  border-top: 1px solid #d8d8d8;
}
.round {
  height: 33px;
  padding: 0 11px;
  border: 1px solid #d2d1cc;
  border-radius: 17px;
  background: #e8e7e2;
  color: #1a1a1a;
  font: 600 15px Inter, sans-serif;
}
.create { padding: 0 15px; }
.badge { padding: 0 8px; border-radius: 4px; background: #e8e7e2; color: #6b7280; font-size: 14px; line-height: 22px; }
.createwrap { position: relative; }
.menu {
  position: absolute;
  right: 0;
  bottom: 39px;
  display: flex;
  flex-direction: column;
  width: 220px;
  border: 1px solid #dcdbd6;
  border-radius: 6px;
  background: #f0efea;
  box-shadow: 0 3px 10px rgba(0, 0, 0, .14);
}
.menu button { height: 42px; padding: 0 16px; color: #1a1a1a; font: 16px Inter, sans-serif; text-align: left; }
.build {
  display: flex;
  align-items: center;
  gap: 9px;
  flex: none;
  height: 35px;
  padding: 0 17px;
  background: #202846;
  color: #c9a53c;
  font-family: "Liberation Sans", Arial, sans-serif;
  font-size: 15px;
}
.bar { width: 1px; height: 12px; background: #66603f; }

/* Status bar */
.status {
  display: flex;
  align-items: center;
  gap: 27px;
  flex: none;
  height: 38px;
  padding: 0 33px;
  border-top: 1px solid #bdbdbd;
  background: #f4f4f4;
  color: #666;
  font-size: 16px;
}
.st { display: flex; align-items: center; gap: 8px; white-space: nowrap; }
.st svg, .view svg, .zb svg { fill: none; stroke: #666; stroke-width: 1.5; }
.lang { margin: 0 4px 0 2px; }
.right { display: flex; align-items: center; margin-left: auto; gap: 14px; }
.focus { gap: 16px; margin-right: 5px; }
.views { display: flex; gap: 7px; }
.view { display: grid; place-items: center; width: 42px; height: 30px; border-radius: 4px; }
.view.on { background: #b8b8b8; }
.zoom { display: flex; align-items: center; gap: 9px; margin-right: 8px; }
.zoom input {
  appearance: none;
  width: 136px;
  height: 24px;
  margin: 0;
  background: linear-gradient(#a8a8a8, #a8a8a8) center / 100% 6px no-repeat;
}
.zoom input::-webkit-slider-thumb {
  appearance: none;
  width: 22px;
  height: 22px;
  border-radius: 50%;
  background: #fff;
  box-shadow: 0 0 3px rgba(0, 0, 0, .4);
}
```
